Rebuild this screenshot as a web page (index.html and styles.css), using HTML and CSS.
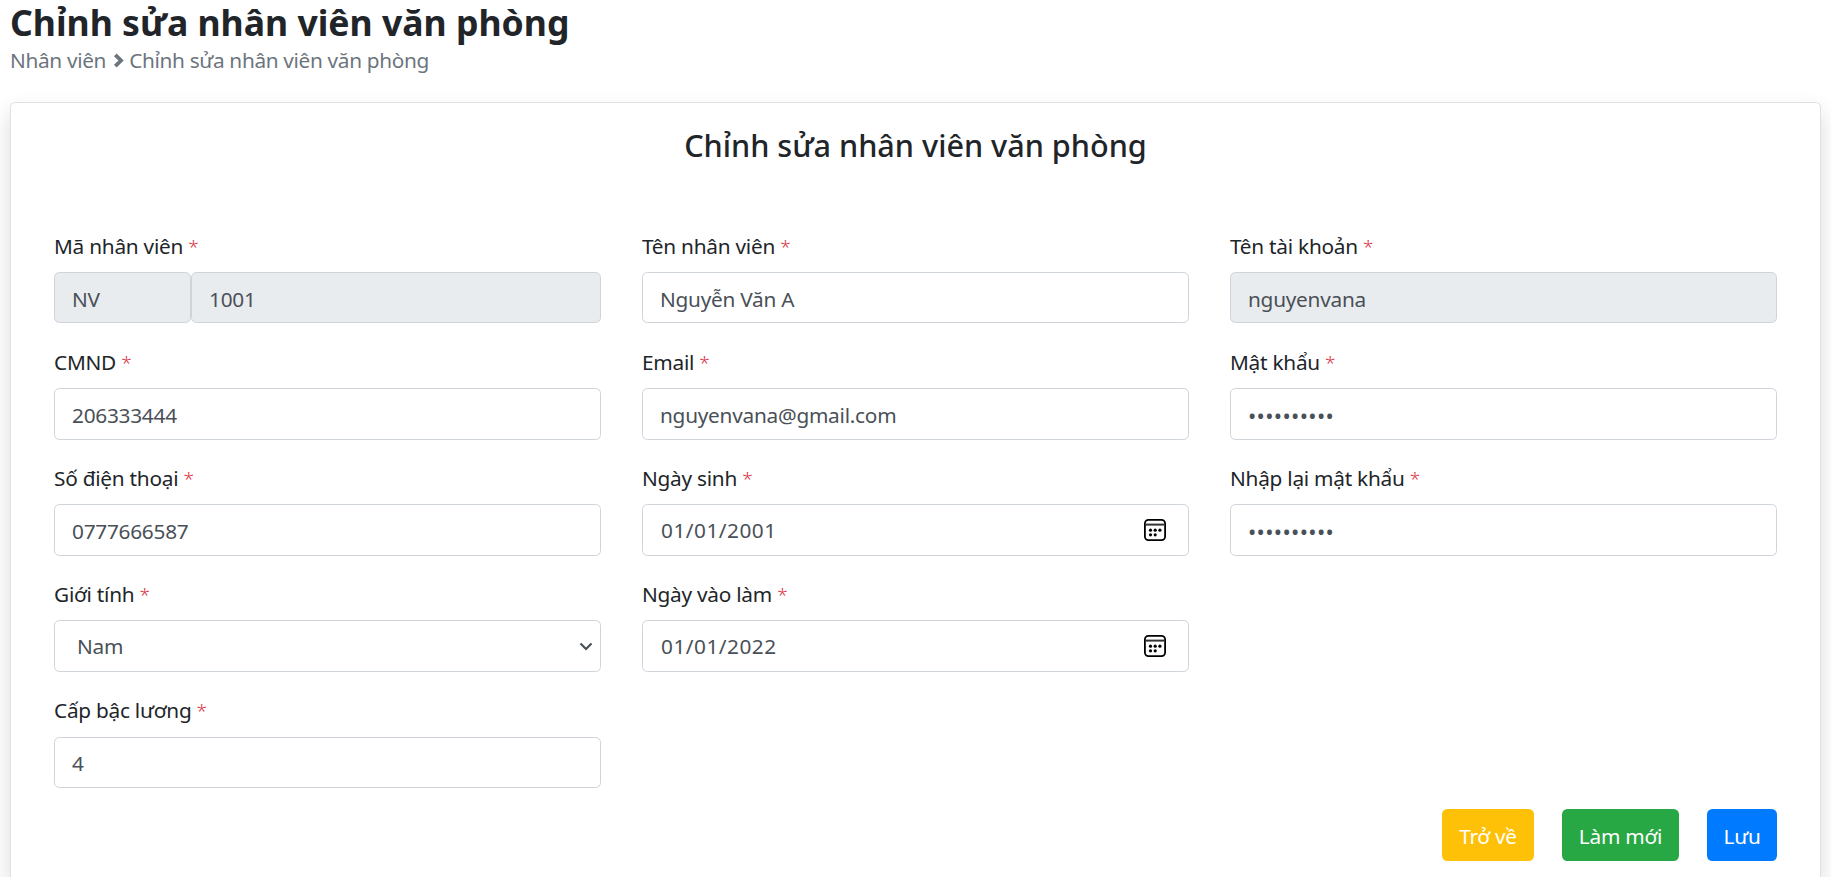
FILE: index.html
```
<!DOCTYPE html>
<html lang="vi">
<head>
<meta charset="utf-8">
<title>Chỉnh sửa nhân viên văn phòng</title>
<link rel="stylesheet" href="styles.css">
</head>
<body>
<svg width="0" height="0" class="defs" aria-hidden="true">
  <symbol id="calendar" viewBox="0 0 24 24">
    <rect x="1.9" y="1.9" width="20.2" height="20.2" rx="3.6" fill="none" stroke="#000" stroke-width="1.8"/>
    <path d="M2 6.6h20" stroke="#333" stroke-width="2"/>
    <g fill="#000"><circle cx="7.5" cy="12.2" r="1.6"/><circle cx="12.2" cy="12.2" r="1.6"/><circle cx="16.9" cy="12.2" r="1.6"/><circle cx="7.5" cy="16.8" r="1.6"/><circle cx="12.2" cy="16.8" r="1.6"/></g>
  </symbol>
</svg>
<header class="page-header">
  <h1 class="page-title">Chỉnh sửa nhân viên văn phòng</h1>
  <nav class="breadcrumb">
    <span class="crumb-root">Nhân viên</span>
    <svg class="crumb-arrow" viewBox="0 0 10 14"><path d="M2 1.7 7.4 7 2 12.3" fill="none" stroke="currentColor" stroke-width="3.5"/></svg>
    <span class="crumb-current">Chỉnh sửa nhân viên văn phòng</span>
  </nav>
</header>
<main class="card">
  <h2 class="card-title">Chỉnh sửa nhân viên văn phòng</h2>
  <form class="form">
    <div class="column">
      <div class="field"><label class="label">Mã nhân viên <span class="required">*</span></label>
        <div class="group"><input class="control prefix" value="NV" disabled><input class="control" value="1001" disabled></div></div>
      <div class="field"><label class="label">CMND <span class="required">*</span></label><input class="control" value="206333444"></div>
      <div class="field"><label class="label">Số điện thoại <span class="required">*</span></label><input class="control" value="0777666587"></div>
      <div class="field"><label class="label">Giới tính <span class="required">*</span></label>
        <div class="control select"><span>Nam</span><svg class="select-arrow" viewBox="0 0 14 9"><path d="m1.5 1.5 5.5 5.5 5.5-5.5" fill="none" stroke="currentColor" stroke-width="2.2"/></svg></div></div>
      <div class="field"><label class="label">Cấp bậc lương <span class="required">*</span></label><input class="control" value="4"></div>
    </div>
    <div class="column">
      <div class="field"><label class="label">Tên nhân viên <span class="required">*</span></label><input class="control" value="Nguyễn Văn A"></div>
      <div class="field"><label class="label">Email <span class="required">*</span></label><input class="control" value="nguyenvana@gmail.com"></div>
      <div class="field"><label class="label">Ngày sinh <span class="required">*</span></label>
        <div class="control date"><span>01/01/2001</span><svg class="calendar"><use href="#calendar"/></svg></div></div>
      <div class="field"><label class="label">Ngày vào làm <span class="required">*</span></label>
        <div class="control date"><span>01/01/2022</span><svg class="calendar"><use href="#calendar"/></svg></div></div>
    </div>
    <div class="column">
      <div class="field"><label class="label">Tên tài khoản <span class="required">*</span></label><input class="control" value="nguyenvana" disabled></div>
      <div class="field"><label class="label">Mật khẩu <span class="required">*</span></label><input class="control password" value="••••••••••"></div>
      <div class="field"><label class="label">Nhập lại mật khẩu <span class="required">*</span></label><input class="control password" value="••••••••••"></div>
    </div>
  </form>
  <div class="actions">
    <button class="button back">Trở về</button>
    <button class="button reset">Làm mới</button>
    <button class="button save">Lưu</button>
  </div>
</main>
</body>
</html>
```
FILE: styles.css
```
* { box-sizing: border-box; }
body {
  margin: 0;
  padding: 0 10px;
  height: 877px;
  overflow: hidden;
  background: #fff;
  color: #212529;
  font-family: "Noto Sans", "Open Sans", sans-serif;
  font-size: 20.8px;
  font-weight: 400;
  letter-spacing: -0.25px;
  line-height: 32.4px;
}
.defs { position: absolute; }
.page-header { height: 102px; }
.page-title {
  margin: 0;
  font-size: 35.6px;
  line-height: 44px;
  font-weight: 700;
  letter-spacing: 0;
}
.breadcrumb {
  display: flex;
  align-items: center;
  color: #6c757d;
  letter-spacing: -0.33px;
}
.crumb-arrow { width: 11px; height: 15px; margin: 0 5px 0 7px; }
.card {
  height: 775px;
  padding: 0 43px;
  background: #fff;
  border: 1px solid #dee2e6;
  border-bottom: 0;
  border-radius: 5.4px 5.4px 0 0;
  box-shadow: 0 10.8px 21.6px rgba(0, 0, 0, .15);
}
.card-title {
  margin: 0;
  padding-top: 23px;
  height: 126px;
  text-align: center;
  font-size: 30.6px;
  line-height: 39px;
  font-weight: 500;
  letter-spacing: 0;
}
.form {
  display: grid;
  grid-template-columns: repeat(3, 1fr);
  column-gap: 41px;
  height: 580px;
}
.field { height: 116.1px; }
.label { display: block; height: 43.2px; padding-top: 1px; white-space: pre; }
.required { color: #dc3545; font-size: 19px; font-weight: 300; }
.control {
  display: block;
  width: 100%;
  height: 51.3px;
  padding: 2px 17px 0;
  border: 1px solid #ced4da;
  border-radius: 5.4px;
  background: #fff;
  color: #495057;
  font: inherit;
  letter-spacing: inherit;
}
.control:disabled { background: #e9ecef; }
.group { display: flex; }
.prefix { flex: 0 0 137px; }
.password { font-size: 22px; letter-spacing: 0.35px; }
.select, .date {
  display: flex;
  align-items: center;
  justify-content: space-between;
}
.select { padding: 1px 7px 0 22px; }
.select-arrow { width: 14px; height: 9px; }
.date { padding: 0 21px 0 18px; letter-spacing: 0.5px; }
.calendar { width: 24px; height: 24px; }
.actions {
  display: flex;
  justify-content: flex-end;
  gap: 28px;
}
.button {
  height: 52px;
  padding: 2px 0 0;
  border: 0;
  border-radius: 5.4px;
  color: #fff;
  font: inherit;
  letter-spacing: inherit;
}
.back { width: 92px; background: #ffc107; }
.reset { width: 117px; background: #28a745; }
.save { width: 70px; background: #007bff; }
```
